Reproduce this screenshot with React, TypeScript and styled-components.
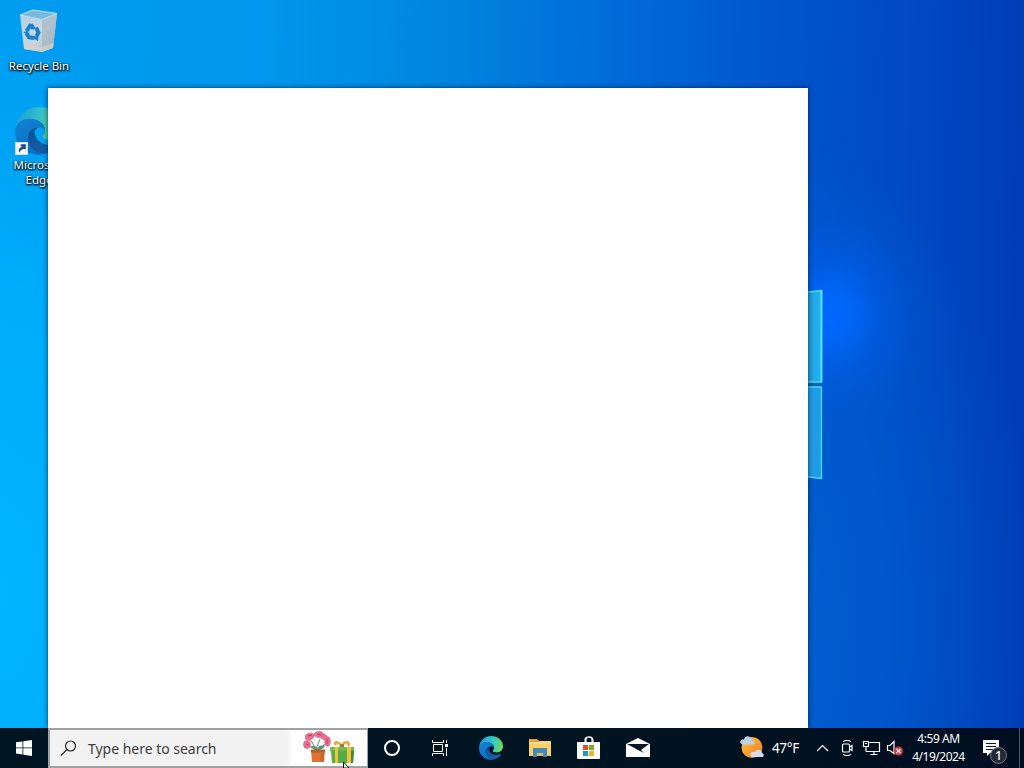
import React from 'react';
import styled, { createGlobalStyle } from 'styled-components';

const App = () => (
  <React.Fragment>
    <GlobalStyles />
    <Desktop>
      <LogoPanes />
      <Workspace>
        <Shortcuts>
          <Shortcut>
            <RecycleBinIcon />
            <ShortcutLabel>Recycle Bin</ShortcutLabel>
          </Shortcut>
          <Shortcut>
            <EdgeShortcutIcon>
              <EdgeIcon size={48} id="desktop" />
              <ShortcutArrow />
            </EdgeShortcutIcon>
            <ShortcutLabel>
              Microsoft
              <br />
              Edge
            </ShortcutLabel>
          </Shortcut>
        </Shortcuts>
        <BlankWindow />
      </Workspace>
      <Taskbar>
        <TaskButton $width={48}>
          <StartIcon />
        </TaskButton>
        <SearchBox>
          <SearchIcon />
          <SearchText>Type here to search</SearchText>
          <SearchHighlight>
            <GiftIcon />
          </SearchHighlight>
        </SearchBox>
        <TaskButton $width={48}>
          <CortanaRing />
        </TaskButton>
        <TaskButton $width={49}>
          <TaskViewIcon />
        </TaskButton>
        <TaskButton $width={51}>
          <EdgeIcon size={24} id="taskbar" />
        </TaskButton>
        <TaskButton $width={48}>
          <ExplorerIcon />
        </TaskButton>
        <TaskButton $width={49}>
          <StoreIcon />
        </TaskButton>
        <TaskButton $width={50}>
          <MailIcon />
        </TaskButton>
        <Tray>
          <Weather>
            <WeatherIcon />
            <Temperature>47°F</Temperature>
          </Weather>
          <TrayIcons />
          <Clock>
            <Time>4:59 AM</Time>
            <Day>4/19/2024</Day>
          </Clock>
          <Notifications>
            <NoteIcon />
            <Badge>1</Badge>
          </Notifications>
          <ShowDesktop />
        </Tray>
      </Taskbar>
      <Cursor />
    </Desktop>
  </React.Fragment>
);

export default App;

const RecycleBinIcon = () => (
  <svg width="48" height="48" viewBox="0 0 48 48">
    <defs>
      <linearGradient id="bin" x1="0" x2="1" y1="0" y2="1">
        <stop offset="0" stopColor="#b0d1e6" />
        <stop offset=".55" stopColor="#cbd6df" />
        <stop offset="1" stopColor="#a9b8c2" />
      </linearGradient>
    </defs>
    <path d="M5 7 27 11.5 42 6 38 40 27 44 9 41Z" fill="url(#bin)" />
    <path d="M27 11.5 42 6 38 40 27 44Z" fill="#9fb4c2" opacity=".6" />
    <path d="M9 36 27 39 38.500 35 38 40 27 44 9 41Z" fill="#d6d0ca" opacity=".75" />
    <path d="M5 7 18 2 42 5.500 27 11.500Z" fill="#76b9df" stroke="#c3dfef" strokeWidth="1" />
    <g fill="none" stroke="#1680d1" strokeWidth="4">
      <path d="m11.500 23 3.500-5.300 3.500 1.500" />
      <path d="m21 19.500 2.500 5.200-2 3.500" />
      <path d="m19.500 30-5.500-.7-2.500-4" />
    </g>
    <path d="m17 15 4 6-5 .5ZM24 25l-6 5 5 3ZM8 24l5-1 1 5Z" fill="#1680d1" />
  </svg>
);

const EdgeIcon = ({ size, id }: { size: number; id: string }) => (
  <svg width={size} height={size} viewBox="0 0 24 24">
    <defs>
      <linearGradient id={`${id}-top`} x1="0" x2="1" y1=".3" y2=".45">
        <stop offset="0" stopColor="#1b9ddb" />
        <stop offset=".5" stopColor="#32c0cb" />
        <stop offset="1" stopColor="#67dc66" />
      </linearGradient>
      <linearGradient id={`${id}-left`} x1="0" x2=".5" y1="0" y2="1">
        <stop offset="0" stopColor="#1283cf" />
        <stop offset="1" stopColor="#0870c8" />
      </linearGradient>
      <linearGradient id={`${id}-wave`} x1="0" x2="1" y1="0" y2="1">
        <stop offset="0" stopColor="#0d5295" />
        <stop offset="1" stopColor="#1760b4" />
      </linearGradient>
    </defs>
    <path
      d="M.1 11C.8 4.700 5.800 0 12.200 0 19 0 24 4.900 24 10.300c0 3.900-2.700 6.100-6.100 6.100-2.600 0-4.100-.7-4.100-1.700 0-.6 1.200-1.100 1.200-3 0-2.900-3.200-5.700-7.400-5.700C3.900 6 1.200 8.200.1 11Z"
      fill={`url(#${id}-top)`}
    />
    <path
      d="M0 12C.2 8.200 3.700 5.900 7.500 5.900c4.500 0 7.500 2.700 7.500 5.700-.9-1.100-2.200-1.600-3.500-1.200-2.300.7-3.700 3.100-3.300 5.800.4 4.100 3.900 7.300 6.300 7.500C7.200 25.200-.2 19.700 0 12Z"
      fill={`url(#${id}-left)`}
    />
    <path
      d="M11.700 10.300c-1.800.6-2.200 2.300-1.600 3.900 1.500 4.200 6.600 6 11.400 3.600.7-.3 1.100.1.700.7-2 3.100-5.600 5-8.300 4.900-4.200-.2-7.400-4-7.400-8 0-2.700 2.100-5.100 5.200-5.100Z"
      fill={`url(#${id}-wave)`}
    />
  </svg>
);

const ShortcutArrow = () => (
  <ArrowBox viewBox="0 0 12 12">
    <path d="M.5.5h11v11H.5Z" fill="#fff" stroke="#d1d5dc" />
    <path d="M4 10C2.500 7 4.500 5 6.500 4.700L5 3.200 5.500 2H10v5L8.500 6.500C6.500 6.500 5 7.500 4 10Z" fill="#174b91" />
  </ArrowBox>
);

const StartIcon = () => (
  <svg width="16" height="16" viewBox="0 0 16 16" fill="#fff">
    <path d="M0 2.300 6.500 1.400v6.100H0ZM7.300 1.300 16 0v7.500H7.300ZM0 8.300h6.500v6.100L0 13.500ZM7.300 8.300H16V16l-8.700-1.300Z" />
  </svg>
);

const SearchIcon = () => (
  <svg width="17" height="17" viewBox="0 0 17 17" fill="none" stroke="#252525" strokeWidth="1.200">
    <circle cx="10.500" cy="6" r="5" />
    <path d="M7 9.500.8 15.700" />
  </svg>
);

const GiftIcon = () => (
  <svg width="53" height="34" viewBox="0 0 53 34">
    <path d="m7 8 6 10L17 8m7 3-9 9M5 14l9 6" stroke="#64906b" fill="none" />
    <path d="M8 15q4-1 6 2 4-4 8-2-2 4-8 4-5-1-6-4Z" fill="#5d9470" />
    <g fill="#ee6e91" stroke="#d25b7d" strokeWidth=".6">
      <ellipse cx="6.500" cy="5.500" rx="4.500" ry="3.200" transform="rotate(-20 6.500 5.500)" />
      <ellipse cx="16" cy="3.500" rx="5" ry="3" />
      <ellipse cx="4" cy="13.500" rx="3.500" ry="4" />
      <ellipse cx="24.500" cy="10.500" rx="2.800" ry="4.800" />
      <ellipse cx="21" cy="6" rx="3" ry="2.500" />
    </g>
    <path d="m5 5 4-1m5-1 4 1M3 13l3 1m18-6v5" stroke="#b13a63" />
    <path d="M8 19h14l-1 12H9Z" fill="#dd7331" />
    <path d="M8 18.500h14v3H8Z" fill="#b95c30" />
    <path d="M18 22h3v9h-4Z" fill="#c7682f" />
    <path d="M27 16h24v4l-1 12H29l-1-12h-1Z" fill="#54ad49" />
    <path d="M44 16h7v4l-1 12h-6Z" fill="#3f8a46" />
    <path d="M27 16h24v3.500H27Z" fill="#70bd56" />
    <path d="M32 16h3v16h-3ZM44 16h4v16h-4Z" fill="#efc439" />
    <path d="M39 15c-4-5-9-5-6-1m6 1c3-6 9-4 6 0" fill="none" stroke="#e2a83a" strokeWidth="2.400" />
    <path d="M37 13h4v3h-4Z" fill="#a9762d" />
  </svg>
);

const TaskViewIcon = () => (
  <svg width="17" height="16" viewBox="0 0 17 16" fill="none" stroke="#fff">
    <path d="M.5 0v2.500h11V0M.5 16v-2.500h11V16M1.500 4.500h9v7h-9ZM14.500 0v3m0 5v8" />
    <path d="M13 4h3v3h-3Z" fill="#fff" stroke="none" />
  </svg>
);

const ExplorerIcon = () => (
  <svg width="22" height="18" viewBox="0 0 22 18">
    <path d="M0 0h8l2 2h12v15H0Z" fill="#dfa43b" />
    <path d="M0 3h9l2-1h11v15H0Z" fill="#f9d067" />
    <path d="M0 3h22v2H0Z" fill="#fbd97e" />
    <path d="M4 9h14v9h-4v-4H8v4H4Z" fill="#4589bb" />
    <path d="M8 14h6v3H8Z" fill="#dbbd62" />
  </svg>
);

const StoreIcon = () => (
  <svg width="23" height="24" viewBox="0 0 23 24">
    <path d="M8 7V4q0-3 3-3 4 0 4 3v3m-6 0V3q1-3 5-2 2 1 2 3v3" fill="none" stroke="#eee" strokeWidth="1.200" />
    <path d="M0 6h23v16q0 1-1 1H1q-1 0-1-1Z" fill="#fff" />
    <path d="M6 9h5v5H6Z" fill="#e34f2b" />
    <path d="M12 9h5v5h-5Z" fill="#79ad28" />
    <path d="M6 15h5v5H6Z" fill="#169ccf" />
    <path d="M12 15h5v5h-5Z" fill="#f1b21e" />
  </svg>
);

const MailIcon = () => (
  <svg width="24" height="20" viewBox="0 0 24 20">
    <path d="M0 6 12 0l12 6v13H0Z" fill="#fff" />
    <path d="M1 6h22l-8 6 3 3-6-3Z" fill="#061722" />
  </svg>
);

const WeatherIcon = () => (
  <svg width="24" height="24" viewBox="0 0 24 24">
    <defs>
      <linearGradient id="sun" x1="0" x2="1" y1="0" y2="1">
        <stop offset="0" stopColor="#ffc044" />
        <stop offset="1" stopColor="#f37c20" />
      </linearGradient>
    </defs>
    <circle cx="12" cy="11.500" r="10.500" fill="url(#sun)" />
    <path d="M2 8.500q-3-2-1-4 1-2 3-1 1-4 5-3 3 1 3 4 4 0 2 4Z" fill="#bed0e4" />
    <path d="M12 21q-3-2-1-4 1-2 4-1 1-3 5-2 2 1 2 3 3 1 1 4Z" fill="#d3dceb" />
  </svg>
);

const TrayIcons = () => (
  <TrayDrawing viewBox="0 0 88 24" fill="none" stroke="#fff" strokeWidth="1.200">
    <path d="m0 15 5.500-5.500L11 15" />
    <path d="M26 5.500q4-2 8 0M26 18.500q4 2 8 0" />
    <rect x="25.500" y="8" width="7" height="8" rx="1" />
    <path d="m32.500 11 2.500-1.500v5L32.500 13" />
    <path d="M52 6.500h10.500v9H49M53.500 18.500h7M57 15.500v3" />
    <path d="M46.500 5.500h5v5h-5ZM49 10.500v5M48 7.500h2" />
    <path d="M70.500 9.500H73L77 5.500v12L73 14.500h-2.500Z" />
    <circle cx="81.500" cy="15" r="4.500" fill="#d43c41" stroke="none" />
    <path d="m79.500 13 4 4m0-4-4 4" />
  </TrayDrawing>
);

const NoteIcon = () => (
  <svg width="16" height="16" viewBox="0 0 16 16">
    <path d="M0 0h16v13H7l-3 3v-3H0Z" fill="#fff" />
    <path d="M3 3.500h10M3 6.500h10M3 9.500h7" stroke="#101923" />
  </svg>
);

const LogoPanes = () => (
  <PanesDrawing viewBox="0 0 16 192">
    <defs>
      <linearGradient id="pane" x2="1">
        <stop offset="0" stopColor="#219ed6" />
        <stop offset="1" stopColor="#23b4fa" />
      </linearGradient>
    </defs>
    <path d="M0 3 13.500 1.500v91.500H0Z" fill="url(#pane)" />
    <path d="M0 98h13.500v91.500L0 188Z" fill="#209ce9" />
    <path d="M0 3 13.500 1.500V93H0M0 98h13.500v91.500L0 188" stroke="#4cdcf5" strokeWidth="1.300" fill="none" />
    <path d="M13.500 1.500V93" stroke="#5ff0ff" strokeWidth="1.600" />
    <path d="M0 95.500h14" stroke="#0062ae" strokeWidth="3" />
  </PanesDrawing>
);

const Cursor = () => (
  <CursorDrawing viewBox="0 0 8 6">
    <path d="M.5 0v6H6Z" fill="#fff" stroke="#111" />
  </CursorDrawing>
);

const GlobalStyles = createGlobalStyle`
  * {
    box-sizing: border-box;
  }

  body {
    margin: 0;
    overflow: hidden;
  }
`;

const Desktop = styled.main`
  position: relative;
  display: flex;
  flex-direction: column;
  width: 1024px;
  height: 768px;
  overflow: hidden;
  font-family: 'Noto Sans', 'Open Sans', sans-serif;
  color: #fff;
  background:
    radial-gradient(
      ellipse 120px 140px at 832px 315px,
      #0068ff 0%,
      rgba(0, 104, 255, 0.85) 15%,
      rgba(0, 98, 240, 0.45) 40%,
      rgba(0, 90, 225, 0.15) 70%,
      transparent 100%
    ),
    radial-gradient(ellipse 250px 480px at 790px 620px, rgba(0, 98, 208, 0.8), transparent),
    radial-gradient(ellipse 260px 580px at 0 590px, #00b5ff, rgba(0, 178, 255, 0.75) 50%, transparent),
    linear-gradient(91deg, #009cf0 0%, #0098ee 25%, #0086e0 42%, #006cd8 59%, #0054cc 76%, #004ac4 87%, #003cb6 100%);
`;

const Workspace = styled.div`
  display: flex;
  height: 728px;
`;

const Shortcuts = styled.div`
  flex: 0 0 48px;
  display: flex;
  flex-direction: column;
  gap: 34px;
  width: 48px;
  min-width: 0;
  padding-top: 8px;
`;

const Shortcut = styled.div`
  display: flex;
  flex-direction: column;
  align-items: center;
  width: 78px;
`;

const EdgeShortcutIcon = styled.div`
  position: relative;
  height: 48px;
`;

const ArrowBox = styled.svg`
  position: absolute;
  left: 0;
  bottom: 0;
  width: 13px;
  height: 13px;
`;

const ShortcutLabel = styled.span`
  margin-top: 2px;
  font-size: 11.500px;
  line-height: 15px;
  letter-spacing: -0.02px;
  text-align: center;
  white-space: nowrap;
  text-shadow: 1px 1px 2px #000, 0 1px 2px #000, 0 0 2px rgba(0, 0, 0, 0.6);
`;

const BlankWindow = styled.section`
  position: relative;
  flex: 0 0 760px;
  height: 640px;
  margin-top: 88px;
  background: #fff;
  box-shadow: 0 0 5px rgba(0, 22, 48, 0.75);
`;

const PanesDrawing = styled.svg`
  position: absolute;
  left: 808px;
  top: 289px;
  width: 16px;
  height: 192px;
`;

const Taskbar = styled.footer`
  position: relative;
  display: flex;
  height: 40px;
  background: linear-gradient(90deg, #001522, #001320 65%, #000d21);
`;

const TaskButton = styled.div<{ $width: number }>`
  flex: 0 0 ${({ $width }) => $width}px;
  display: flex;
  align-items: center;
  justify-content: center;
`;

const SearchBox = styled.div`
  display: flex;
  align-items: center;
  flex: 0 0 320px;
  padding-left: 10px;
  border: 2px solid #a2a2a2;
  border-width: 2px 1px 2px 2px;
  background: #f2f2f2;
`;

const SearchText = styled.span`
  margin-left: 11px;
  color: #3d3d3d;
  font-size: 14px;
  letter-spacing: -0.02px;
  white-space: nowrap;
`;

const SearchHighlight = styled.div`
  display: flex;
  align-items: center;
  justify-content: center;
  width: 80px;
  height: 36px;
  padding-left: 4px;
  margin-left: auto;
  background: linear-gradient(90deg, #f2f2f2, #fff 5px);
`;

const CortanaRing = styled.div`
  width: 16px;
  height: 16px;
  border: 2px solid #fff;
  border-radius: 50%;
`;

const Tray = styled.div`
  display: flex;
  align-items: center;
  flex: 1;
  padding-left: 77px;
`;

const Weather = styled.div`
  display: flex;
  align-items: center;
  flex: 0 0 77px;
  gap: 8px;
`;

const Temperature = styled.span`
  font-size: 13.500px;
  letter-spacing: -0.35px;
`;

const TrayDrawing = styled.svg`
  flex: 0 0 88px;
  height: 24px;
`;

const Clock = styled.div`
  flex: 0 0 67px;
  font-size: 12px;
  line-height: 18px;
  letter-spacing: -0.42px;
  text-align: center;
`;

const Time = styled.div`
  height: 18px;
`;

const Day = styled.div`
  height: 18px;
  letter-spacing: -0.5px;
`;

const Notifications = styled.div`
  position: relative;
  display: flex;
  width: 34px;
  margin-left: 11px;
`;

const Badge = styled.span`
  position: absolute;
  left: 7px;
  top: 7px;
  width: 17px;
  height: 17px;
  border: 1px solid #777d86;
  border-radius: 50%;
  background: #252b34;
  font-size: 12.500px;
  font-weight: 500;
  line-height: 15px;
  text-align: center;
`;

const ShowDesktop = styled.div`
  width: 5px;
  height: 40px;
  margin-left: auto;
  border-left: 1px solid #4a5665;
`;

const CursorDrawing = styled.svg`
  position: absolute;
  left: 343px;
  top: 762px;
  width: 8px;
  height: 6px;
`;
